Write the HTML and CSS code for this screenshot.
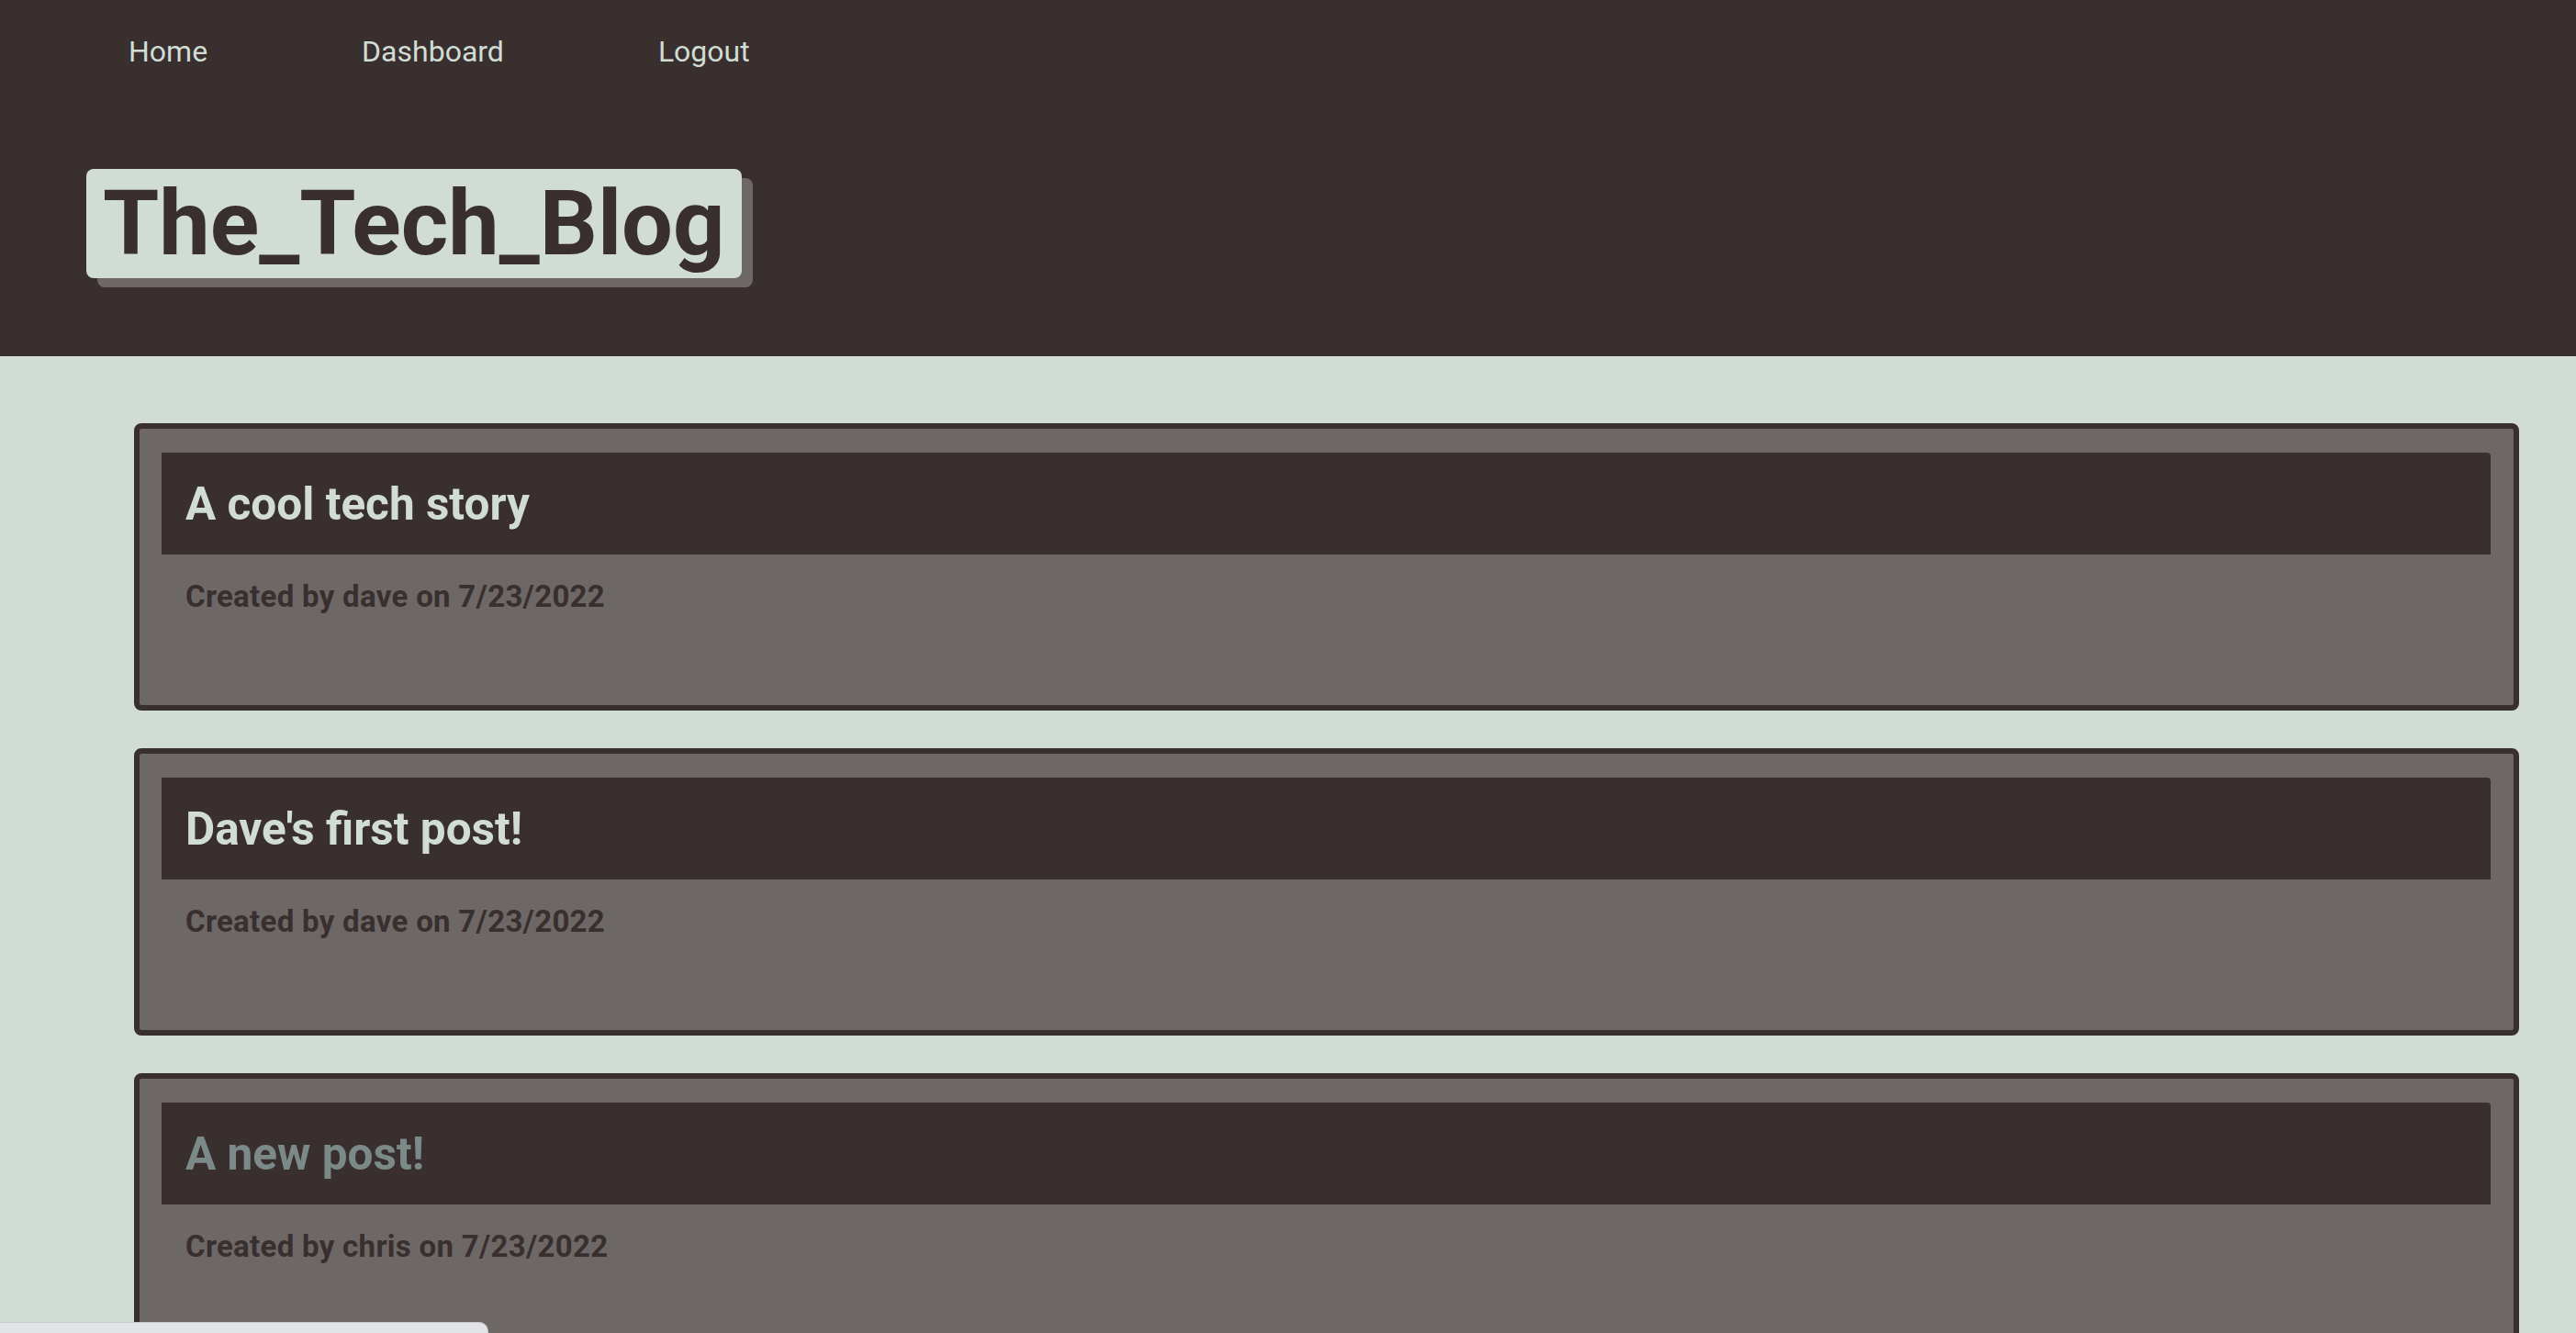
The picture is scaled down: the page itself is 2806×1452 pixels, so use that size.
FILE: index.html
```html
<!DOCTYPE html>
<html lang="en">
<head>
<meta charset="utf-8">
<title>The_Tech_Blog</title>
<link rel="stylesheet" href="styles.css">
</head>
<body>
<header class="site-header">
  <nav class="nav">
    <a class="nav-link" href="#">Home</a>
    <a class="nav-link" href="#">Dashboard</a>
    <a class="nav-link" href="#">Logout</a>
  </nav>
  <h1 class="brand">The_Tech_Blog</h1>
</header>
<main class="posts">
  <article class="post">
    <h2 class="post-title">A cool tech story</h2>
    <p class="post-meta">Created by dave on 7/23/2022</p>
  </article>
  <article class="post">
    <h2 class="post-title">Dave's first post!</h2>
    <p class="post-meta">Created by dave on 7/23/2022</p>
  </article>
  <article class="post">
    <h2 class="post-title post-title-muted">A new post!</h2>
    <p class="post-meta">Created by chris on 7/23/2022</p>
  </article>
</main>
<div class="status-bar"></div>
</body>
</html>
```

FILE: styles.css
```css
html, body {
  margin: 0;
  padding: 0;
}

body {
  background: #d0dcd4;
  font-family: Roboto, "Liberation Sans", sans-serif;
  color: #382f2e;
  overflow: hidden;
  height: 1452px;
}

.site-header {
  background: #382f2e;
  height: 388px;
  box-sizing: border-box;
  padding-top: 32px;
}

.nav {
  display: flex;
  gap: 168px;
  padding-left: 140px;
}

.nav-link {
  color: #d0dcd4;
  text-decoration: none;
  font-size: 32px;
  line-height: 48px;
}

.brand {
  display: inline-block;
  margin: 104px 0 0 94px;
  background: #d0dcd4;
  color: #382f2e;
  font-size: 99px;
  font-weight: 700;
  line-height: 119px;
  height: 119px;
  padding: 0 18px;
  border-radius: 8px;
  box-shadow: 12px 10px 0 #6d6866;
  letter-spacing: 0;
}

.posts {
  display: flex;
  flex-direction: column;
  gap: 41px;
  padding: 73px 62px 0 146px;
}

.post {
  background: #6d6866;
  border: 6px solid #382f2e;
  border-radius: 8px;
  height: 313px;
  box-sizing: border-box;
  padding: 26px 25px 0 24px;
}

.post-title {
  margin: 0;
  background: #382f2e;
  color: #d0dcd4;
  height: 111px;
  box-sizing: border-box;
  padding: 0 26px;
  display: flex;
  align-items: center;
  font-size: 49.5px;
  font-weight: 700;
  border-radius: 0 4px 0 0;
}

.post-title-muted {
  color: #7b8a89;
}

.post-meta {
  margin: 26px 0 0 0;
  padding: 0 26px;
  font-size: 33px;
  letter-spacing: 0.3px;
  font-weight: 700;
  color: #382f2e;
}

.status-bar {
  position: fixed;
  left: 0;
  bottom: 0;
  width: 531px;
  height: 11px;
  background: #e1e3e6;
  border-top: 1px solid #c9cbce;
  border-right: 1px solid #c9cbce;
  border-radius: 0 10px 0 0;
}
```
